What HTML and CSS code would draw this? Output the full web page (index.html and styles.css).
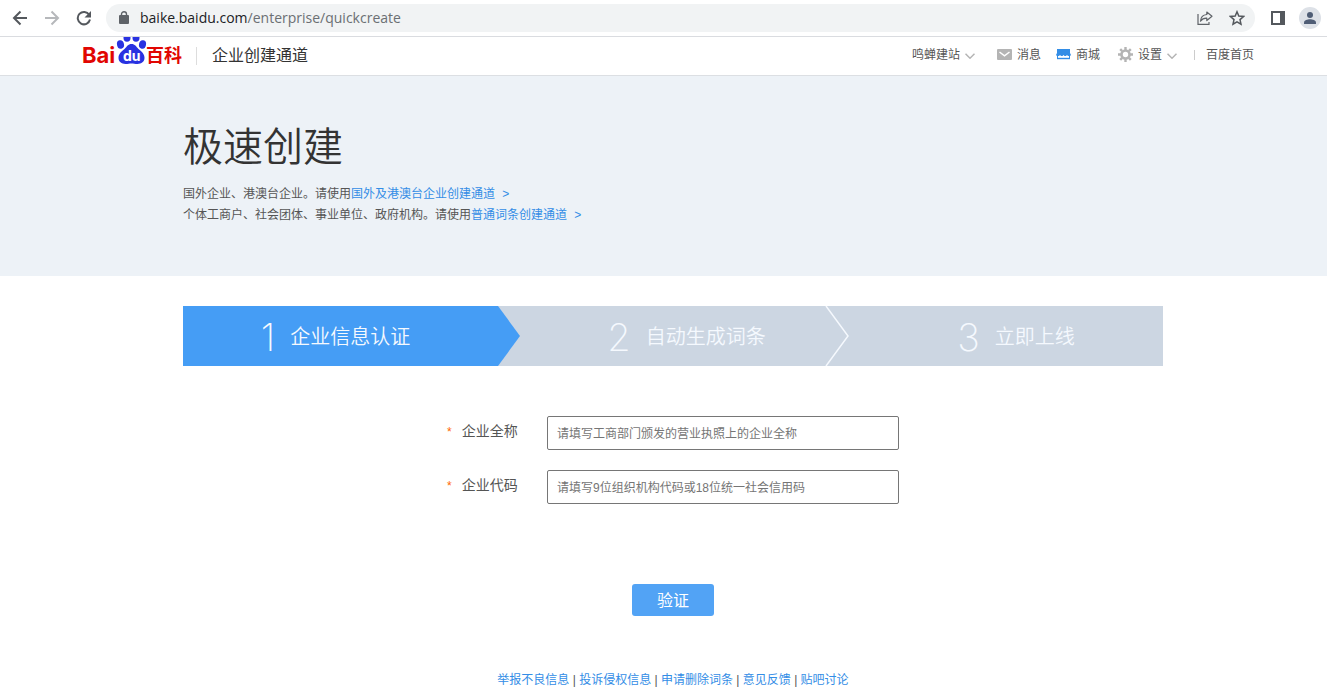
FILE: index.html
```html
<!DOCTYPE html>
<html lang="zh-CN">
<head>
<meta charset="utf-8">
<title>极速创建</title>
<link rel="stylesheet" href="styles.css">
</head>
<body>
<div class="browser">
  <button class="tool" aria-label="后退"><svg width="16" height="16" viewBox="0 0 16 16" fill="none" stroke="#54585d" stroke-width="2"><path d="M15 8H2M8.500 1.500L2 8l6.500 6.500"/></svg></button>
  <button class="tool" aria-label="前进"><svg width="16" height="16" viewBox="0 0 16 16" fill="none" stroke="#b6b8bb" stroke-width="2"><path d="M1 8h13M7.500 1.500L14 8l-6.500 6.500"/></svg></button>
  <button class="tool" aria-label="刷新"><svg width="16" height="16" viewBox="0 0 16 16"><path d="M13.200 4.800A6.200 6.200 0 1 0 14 9.600" fill="none" stroke="#54585d" stroke-width="2"/><path d="M15 1v6.500H8.500z" fill="#54585d"/></svg></button>
  <div class="address">
    <svg width="10" height="14" viewBox="0 0 10 14"><rect y="4" width="10" height="9" rx="1" fill="#5f6368"/><path d="M2.500 5V3.200a2.500 2.500 0 0 1 5 0V5" fill="none" stroke="#5f6368" stroke-width="1.400"/></svg>
    <span class="url">baike.baidu.com<span class="path">/enterprise/quickcreate</span></span>
    <button class="tool share" aria-label="分享"><svg width="16" height="16" viewBox="0 0 16 16" fill="none" stroke="#5f6368" stroke-width="1.200"><path d="M1 4v10.400h11V12"/><path d="M9.800 2L15 6.200 9.800 10.500V8.200C6.800 8.100 5 9 3.500 11.200 3.800 7.400 6.200 4.800 9.800 4.500z" stroke-linejoin="round"/></svg></button>
    <button class="tool" aria-label="收藏"><svg width="16" height="16" viewBox="0 0 16 16"><path d="M8 1.800l1.800 4.300 4.700.4-3.500 3.100 1 4.600L8 11.800l-4 2.400 1-4.600L1.500 6.500l4.700-.4z" fill="none" stroke="#54585d" stroke-width="1.500"/></svg></button>
  </div>
  <button class="tool panel" aria-label="侧边栏"><svg width="14" height="14" viewBox="0 0 14 14"><path d="M1 1h12v12H1z" fill="none" stroke="#54585d" stroke-width="2"/><path d="M9 0h5v14H9z" fill="#54585d"/></svg></button>
  <button class="avatar" aria-label="用户"><svg width="14" height="14" viewBox="0 0 14 14" fill="#4f5d75"><circle cx="7" cy="4" r="3"/><path d="M1 13v-1.500C1 9.200 4.500 8.300 7 8.300s6 .9 6 3.200V13z"/></svg></button>
</div>

<header class="header">
  <a class="logo" href="#" aria-label="百度百科">
    <svg width="102" height="38" viewBox="0 0 102 38">
      <text class="logo-latin" x="1" y="26">Bai</text>
      <g fill="#2932e1">
        <ellipse cx="39.500" cy="7.500" rx="3.500" ry="4.300" transform="rotate(-12 39.500 7.500)"/>
        <ellipse cx="46" cy="0.800" rx="3.500" ry="4"/>
        <ellipse cx="55" cy="0.800" rx="3.500" ry="4"/>
        <ellipse cx="61.500" cy="7.500" rx="3.500" ry="4.300" transform="rotate(12 61.500 7.500)"/>
        <path d="M50.500 7c3.500 0 4.500 2.500 7 5 3.500 3 6 5 6 8.800 0 4-3 6.200-7 6.200-2.500 0-4-.5-6-.5s-3.500.5-6 .5c-4 0-7-2.200-7-6.200 0-3.800 2.500-5.800 6-8.800 2.500-2.500 3.500-5 7-5z"/>
      </g>
      <text class="logo-du" x="42" y="24">du</text>
      <text class="logo-cjk" x="65" y="25">百科</text>
    </svg>
  </a>
  <span class="channel">企业创建通道</span>
  <nav class="nav">
    <a href="#">鸣蝉建站<svg class="caret" width="10" height="6" viewBox="0 0 10 6"><path d="M.5.7L5 5.200 9.500.7"/></svg></a>
    <a class="message" href="#"><svg width="15" height="11" viewBox="0 0 15 11"><rect width="15" height="11" rx="1" fill="#b4b4b4"/><path d="M2.500 3l5 3.800 5-3.800" fill="none" stroke="#fff" stroke-width="1.500"/></svg>消息</a>
    <a class="mall" href="#"><svg width="15" height="11" viewBox="0 0 15 11"><path d="M1 0h13v4l1 2-1 1h-2l-1-1-1 1H8.500l-1-1-1 1H5L4 6 3 7H1L0 6l1-2z" fill="#338de6"/><path d="M1 9.500h13" stroke="#338de6" stroke-width="1.400"/><path d="M1.500 7v2M13.500 7v2" stroke="#338de6"/></svg>商城</a>
    <a class="settings" href="#"><svg width="15" height="15" viewBox="0 0 15 15" fill="none" stroke="#b4b4b4"><circle cx="7.500" cy="7.500" r="4" stroke-width="2.600"/><path stroke-width="2.400" d="M7.500 0v3M7.500 12v3M0 7.500h3M12 7.500h3M2.200 2.200l2 2M10.800 10.800l2 2M2.200 12.800l2-2M10.800 4.200l2-2"/></svg>设置<svg class="caret" width="10" height="6" viewBox="0 0 10 6"><path d="M.5.7L5 5.200 9.500.7"/></svg></a>
    <span class="bar"></span>
    <a href="#">百度首页</a>
  </nav>
</header>

<section class="hero">
  <div class="wrap">
    <h1>极速创建</h1>
    <p>国外企业、港澳台企业。请使用<a href="#">国外及港澳台企业创建通道 <span class="more">&gt;</span></a></p>
    <p>个体工商户、社会团体、事业单位、政府机构。请使用<a href="#">普通词条创建通道 <span class="more">&gt;</span></a></p>
  </div>
</section>

<main class="content">
  <div class="wrap">
    <ol class="steps">
      <li class="step first"><span class="num">1</span>企业信息认证</li>
      <li class="step second"><span class="num">2</span>自动生成词条<svg class="chevron" width="24" height="60" viewBox="0 0 24 60"><path d="M1 0l22 30L1 60"/></svg></li>
      <li class="step third"><span class="num">3</span>立即上线</li>
    </ol>
    <form class="form">
      <div class="row"><label for="name"><span class="star">*</span>企业全称</label><input id="name" type="text" placeholder="请填写工商部门颁发的营业执照上的企业全称"></div>
      <div class="row"><label for="code"><span class="star">*</span>企业代码</label><input id="code" type="text" placeholder="请填写9位组织机构代码或18位统一社会信用码"></div>
      <button class="verify" type="button">验证</button>
    </form>
    <footer class="links"><a href="#">举报不良信息</a> | <a href="#">投诉侵权信息</a> | <a href="#">申请删除词条</a> | <a href="#">意见反馈</a> | <a href="#">贴吧讨论</a></footer>
  </div>
</main>
</body>
</html>
```
FILE: styles.css
```css
* { box-sizing: border-box; }
body {
  margin: 0;
  background: #fff;
  color: #555;
  font: 12px/20px "Liberation Sans", "Noto Sans CJK SC", sans-serif;
}
a { color: #338de6; text-decoration: none; }
button { border: 0; padding: 0; background: none; font: inherit; }
svg { flex: none; }

.browser {
  display: flex;
  align-items: center;
  height: 37px;
  padding: 0 6px 1px 12px;
  gap: 16px;
  border-bottom: 1px solid #dadce0;
}
.tool { display: flex; }
.address {
  display: flex;
  flex: 1;
  align-items: center;
  height: 28px;
  margin-left: -2px;
  padding: 0 10px 0 13px;
  gap: 16px;
  border-radius: 14px;
  background: #f1f3f4;
}
.url { margin-left: -5px; color: #202124; font: 14px/20px "Open Sans", "Noto Sans", sans-serif; }
.path { color: #6b6f73; }
.share { margin-left: auto; }
.panel { margin-right: -2px; }
.avatar {
  display: flex;
  align-items: center;
  justify-content: center;
  width: 22px;
  height: 22px;
  border-radius: 50%;
  background: #dde1e7;
}

.header {
  display: flex;
  align-items: flex-start;
  height: 39px;
  padding: 0 73px 0 81px;
  border-bottom: 1px solid #dcdfe3;
}
.logo { display: flex; }
.logo-latin { fill: #e10602; font: 700 22px Inter, sans-serif; }
.logo-du { fill: #fff; font: 700 14px Inter, sans-serif; }
.logo-cjk { fill: #e10602; font: 700 18px "Noto Sans CJK SC", sans-serif; }
.channel {
  margin: 10px 0 0 13px;
  padding-left: 15px;
  border-left: 1px solid #ddd;
  color: #333;
  font-size: 16px;
  line-height: 18px;
}
.nav { display: flex; align-items: center; height: 35px; margin-left: auto; }
.nav a { display: flex; align-items: center; gap: 5px; color: #555; }
.nav .message { margin-left: 22px; }
.nav .mall { margin-left: 15px; }
.nav .settings { margin-left: 18px; }
.caret { margin-top: 2px; fill: none; stroke: #b4b4b4; stroke-width: 1.5; }
.bar { width: 1px; height: 10px; margin: 0 11px 0 17px; background: #ccc; }

.hero { height: 200px; padding: 41px 0 0 19px; background: #edf2f7; }
.content { padding-left: 19px; }
.wrap { max-width: 980px; margin: 0 auto; }
h1 { margin: 0 0 7px; color: #333; font-size: 40px; font-weight: 350; line-height: 60px; }
.hero p { margin: 0; line-height: 21px; }
.more { margin-left: 4px; }

.steps {
  display: grid;
  grid-template-columns: 337fr 329fr 314fr;
  margin: 30px 0 50px;
  padding: 0;
  list-style: none;
  background: #ccd6e2;
}
.step {
  position: relative;
  display: flex;
  align-items: center;
  justify-content: center;
  height: 60px;
  padding-top: 2px;
  gap: 15px;
  color: #f5f9fe;
  font-size: 20px;
  font-weight: 350;
}
.first {
  padding-right: 32px;
  background: #459df5;
  clip-path: polygon(0 0, calc(100% - 22px) 0, 100% 50%, calc(100% - 22px) 100%, 0 100%);
}
.second { padding-left: 4px; }
.third { padding-left: 20px; }
.num { font: 200 38px/56px Inter, Roboto, sans-serif; }
.chevron { position: absolute; top: 0; right: 0; fill: none; stroke: #f5f9fe; stroke-width: 1.5; }

.form { display: flex; flex-direction: column; gap: 20px; }
.row { display: flex; align-items: center; padding-left: 264px; }
.row label { display: flex; width: 100px; gap: 10px; padding-bottom: 2px; font-size: 14px; line-height: 22px; }
.star { color: #f60; font-size: 12px; line-height: 24px; }
.row input {
  width: 352px;
  height: 34px;
  padding: 1px 9px 0;
  border: 1px solid #767676;
  border-radius: 2px;
  font: inherit;
}
.row input::placeholder { color: #757575; }
.verify {
  align-self: center;
  width: 82px;
  height: 32px;
  margin-top: 60px;
  padding-top: 2px;
  border-radius: 3px;
  background: #52a3f5;
  color: #fff;
  font-size: 16px;
}
.links { margin-top: 54px; text-align: center; }
```
